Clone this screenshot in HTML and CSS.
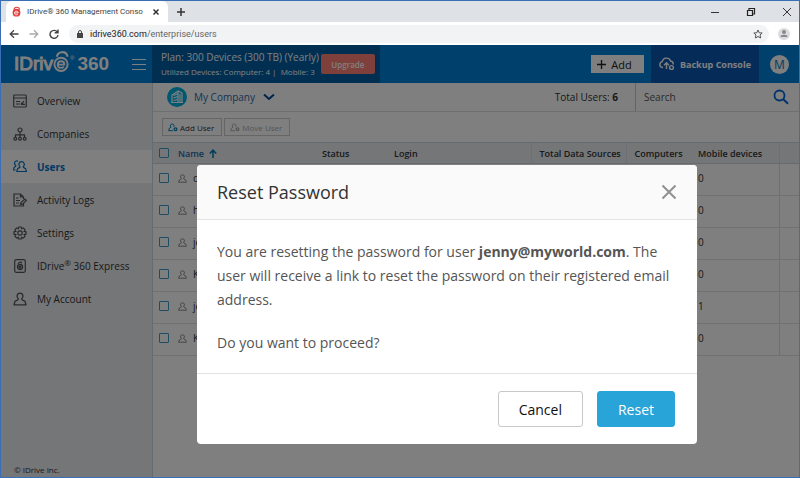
FILE: index.html
```html
<!DOCTYPE html>
<html lang="en">
<head>
<meta charset="utf-8">
<title>IDrive® 360 Management Console</title>
<link rel="stylesheet" href="styles.css">
</head>
<body>
<svg class="defs" aria-hidden="true">
  <symbol id="lock-e" viewBox="0 0 16 18"><path d="M3.500 6C4 0 13 0 13.500 6" fill="none" stroke="currentColor" stroke-width="2"/><circle cx="8" cy="11" r="7" fill="currentColor"/><path d="M4.500 11.500h6.500c0-4-6.200-4-6.500 0 0 4.300 4.500 4 6.200 2" fill="none" stroke="var(--cut)" stroke-width="1.500"/></symbol>
  <symbol id="person" viewBox="0 0 14 14"><path d="M7 1.200a3 3 0 0 0-1.800 5.400L5 7.700 2 9.400 1 12.800h12L12 9.400 9 7.700 8.800 6.600A3 3 0 0 0 7 1.200z" fill="none" stroke="currentColor" stroke-width="1.300" stroke-linejoin="round"/></symbol>
  <symbol id="user-gear" viewBox="0 0 14 12"><path d="M8 5.200a2.600 2.600 0 1 0-3.800.4L1.500 7.500.900 10.500H7" fill="none" stroke="currentColor" stroke-width="1.300"/><circle cx="10.500" cy="8.500" r="2" fill="none" stroke="currentColor" stroke-width="1.700"/></symbol>
</svg>
<div class="browser">
  <div class="tabs">
    <div class="tab">
      <svg class="favicon"><use href="#lock-e"/></svg>
      <span class="tab-title">IDrive® 360 Management Conso</span>
      <button class="plain" aria-label="Close tab"><svg width="8" height="8" viewBox="0 0 8 8"><path d="M1.500 1.500l5 5m0-5l-5 5" stroke="#333" stroke-width="1.500"/></svg></button>
    </div>
    <button class="plain new-tab" aria-label="New tab"><svg width="10" height="10" viewBox="0 0 10 10"><path d="M5 1v8M1 5h8" stroke="#333" stroke-width="1.500"/></svg></button>
    <div class="window-buttons">
      <button class="plain" aria-label="Minimize"><svg width="10" height="10" viewBox="0 0 10 10"><path d="M1 5.500h8" stroke="#333"/></svg></button>
      <button class="plain" aria-label="Restore"><svg width="10" height="10" viewBox="0 0 10 10"><path d="M1.500 3.500h5v5h-5zM3 3V1.500h5.500V7H7" fill="none" stroke="#222" stroke-width="1.200"/></svg></button>
      <button class="plain" aria-label="Close"><svg width="10" height="10" viewBox="0 0 10 10"><path d="M1 1l8 8m0-8l-8 8" stroke="#333"/></svg></button>
    </div>
  </div>
  <div class="toolbar">
    <div class="nav-buttons">
      <button class="plain" aria-label="Back"><svg width="10" height="10" viewBox="0 0 10 10"><path d="M9.500 5h-8M5 1.200L1.200 5 5 8.800" fill="none" stroke="#444" stroke-width="1.300"/></svg></button>
      <button class="plain" aria-label="Forward"><svg width="10" height="10" viewBox="0 0 10 10"><path d="M.500 5h8M5 1.200L8.800 5 5 8.800" fill="none" stroke="#aaa" stroke-width="1.300"/></svg></button>
      <button class="plain" aria-label="Reload"><svg width="10" height="10" viewBox="0 0 10 10"><path d="M8.300 3A4 4 0 1 0 9 6M9 .500v3.300H5.700" fill="none" stroke="#444" stroke-width="1.400"/></svg></button>
    </div>
    <div class="address">
      <svg width="6" height="8" viewBox="0 0 6 8"><path d="M1.500 3.500V2a1.500 1.500 0 0 1 3 0v1.500" fill="none" stroke="#444"/><path d="M0 3h6v5H0z" fill="#444"/></svg>
      <span class="url">idrive360.com<span class="path">/enterprise/users</span></span>
      <svg width="10" height="10" viewBox="0 0 10 10"><path d="M5 1l1.200 2.800 3 .2L7 6l.700 3L5 7.500 2.300 9 3 6 .800 4l3-.2z" fill="none" stroke="#555"/></svg>
    </div>
    <svg class="profile" viewBox="0 0 12 12"><circle cx="6" cy="6" r="6" fill="#dadce0"/><circle cx="6" cy="4" r="2" fill="#888"/><path d="M2.500 9a3.500 2.300 0 0 1 7 0z" fill="#888"/></svg>
  </div>

  <div class="app">
    <header class="header">
      <div class="brand">
        <span class="logo" aria-label="IDrive 360">IDriv<svg class="logo-e" viewBox="0 0 18 24"><path d="M4 7C5 1 14 0 15.500 7" fill="none" stroke="#fff" stroke-width="2.200"/><circle cx="8.500" cy="15" r="7" fill="none" stroke="#fff" stroke-width="2"/><path d="M5 15.200h7c0-4.600-6.800-4.600-7 0 0 4.400 4.600 4.300 6.500 2.200" fill="none" stroke="#fff" stroke-width="1.900"/></svg><small>®</small><b>360</b></span>
        <button class="plain" aria-label="Menu"><svg width="14" height="12" viewBox="0 0 14 12"><path d="M0 1.500h14M0 6.500h14M0 11.500h14" stroke="#fff"/></svg></button>
      </div>
      <div class="plan">
        <div>
          <p class="plan-name">Plan: 300 Devices (300 TB) (Yearly)</p>
          <p class="plan-use">Utilized Devices: Computer: 4 |&nbsp; Mobile: 3</p>
        </div>
        <button class="upgrade">Upgrade</button>
      </div>
      <button class="add"><svg width="9" height="9" viewBox="0 0 10 10"><path d="M5 0v10M0 5h10" stroke="#222" stroke-width="1.500"/></svg>Add</button>
      <button class="backup"><svg width="16" height="14" viewBox="0 0 16 14"><path d="M4 10.500H3.500a3 3 0 0 1-.300-5.900A4.300 4.300 0 0 1 11.500 4a3.200 3.200 0 0 1 2.700 3.500M7.500 12V6M5 8.300L7.500 5.800 10 8.300" fill="none" stroke="#fff" stroke-width="1.400"/><circle cx="12.500" cy="10.500" r="1.900" fill="none" stroke="#fff" stroke-width="1.400"/></svg>Backup Console</button>
      <button class="avatar">M</button>
    </header>

    <div class="columns">
      <nav class="sidebar">
        <a href="#"><svg viewBox="0 0 14 14"><rect x=".700" y="1" width="12.600" height="12" rx="1"/><path d="M1 4h12M3 7.500h4M3 10h4M8.500 8.500v1.800H12M9 10l2-3"/></svg>Overview</a>
        <a href="#"><svg viewBox="0 0 14 14"><circle cx="7" cy="3" r="2"/><path d="M7 5v5M2.500 10V7.800h9V10"/><circle cx="2.300" cy="11.700" r="1.400"/><circle cx="7" cy="11.700" r="1.400"/><circle cx="11.700" cy="11.700" r="1.400"/></svg>Companies</a>
        <a href="#" class="current"><svg viewBox="0 0 14 14"><path d="M8.500 1.700a2.700 2.700 0 0 0-1.700 4.700v1L4.600 8.600 3.800 11.500h9.600l-.8-2.900-2.200-1.200v-1A2.700 2.700 0 0 0 8.500 1.700zM5 1.200a2.300 2.300 0 0 0-2.300 4v1L1 7.500.600 10h2"/></svg>Users</a>
        <a href="#"><svg viewBox="0 0 14 14"><path d="M10.500 11v2H1V1h6.500l3 3v2M7.500 1v3h3M3 5h2.500M3 7.500h4M3 10h3"/><path d="M7.500 11.500l.5-2L12 6l1.500 1.500-4 3.600z"/></svg>Activity Logs</a>
        <a href="#"><svg viewBox="0 0 14 14"><circle cx="7" cy="7" r="2.200"/><path d="M5.800 1h2.400l.4 1.700 1.600-.8 1.800 1.800-.9 1.600 1.900.5v2.400l-1.900.5.900 1.600-1.800 1.800-1.600-.8-.4 1.700H5.800l-.4-1.700-1.600.8L2 10.300l.9-1.600L1 8.200V5.800l1.900-.5L2 3.700l1.800-1.800 1.600.8z"/></svg>Settings</a>
        <a href="#"><svg viewBox="0 0 14 14"><rect x="1.700" y=".700" width="10.600" height="12.600" rx="1.500"/><circle cx="7" cy="8" r="2.600"/><path d="M5 5c.3-2 3-2.500 4-.7M5.800 8h2.400c0-1.500-2.300-1.500-2.400 0 0 1.500 1.500 1.500 2 .8"/></svg><span>IDrive<sup>®</sup> 360 Express</span></a>
        <a href="#"><svg viewBox="0 0 14 14"><use href="#person"/></svg>My Account</a>
        <footer>© IDrive Inc.</footer>
      </nav>

      <main class="main">
        <div class="company-bar">
          <svg class="company-icon" viewBox="0 0 20 20"><circle cx="10" cy="10" r="10" fill="#00b0e0"/><path d="M5 15.500V8l6-4v11.500M11 4l4 2v9.500M4 15.500h12M6.500 8.500L11 6.500M6.500 11L11 9.500M6.500 13.500l4.500-1M13 7v8" fill="none" stroke="#fff" stroke-width="1.200"/></svg>
          <button class="plain company">My Company<svg width="12" height="8" viewBox="0 0 12 8"><path d="M1 1.500l5 4.500 5-4.500" fill="none" stroke="currentColor" stroke-width="2"/></svg></button>
          <span class="total">Total Users: <b>6</b></span>
          <label class="search"><input type="text" placeholder="Search" aria-label="Search"><svg width="16" height="16" viewBox="0 0 16 16"><circle cx="6.500" cy="6.500" r="5" fill="none" stroke="#0064dc" stroke-width="1.800"/><path d="M10 10l5 4.700" stroke="#0064dc" stroke-width="2"/></svg></label>
        </div>
        <div class="actions">
          <button><svg class="blue"><use href="#user-gear"/></svg>Add User</button>
          <button disabled><svg><use href="#user-gear"/></svg>Move User</button>
        </div>
        <table>
          <colgroup><col class="c-check"><col class="c-name"><col class="c-status"><col><col class="c-sources"><col class="c-computers"><col class="c-mobile"><col class="c-end"></colgroup>
          <thead>
            <tr><th><input type="checkbox" aria-label="Select all"></th><th class="sorted">Name <svg width="8" height="9" viewBox="0 0 8 9"><path d="M4 9V1.500M.800 4.500L4 1.200l3.200 3.300" fill="none" stroke="#0078b8" stroke-width="1.500"/></svg></th><th>Status</th><th>Login</th><th class="rule">Total Data Sources</th><th class="rule">Computers</th><th>Mobile devices</th><th class="rule"></th></tr>
          </thead>
          <tbody>
            <tr><td><input type="checkbox" aria-label="Select d"></td><td><svg class="row-user"><use href="#person"/></svg>d</td><td></td><td></td><td></td><td></td><td>0</td><td class="rule"></td></tr>
            <tr><td><input type="checkbox" aria-label="Select h"></td><td><svg class="row-user"><use href="#person"/></svg>h</td><td></td><td></td><td></td><td></td><td>0</td><td class="rule"></td></tr>
            <tr><td><input type="checkbox" aria-label="Select je"></td><td><svg class="row-user"><use href="#person"/></svg>je</td><td></td><td></td><td></td><td></td><td>0</td><td class="rule"></td></tr>
            <tr><td><input type="checkbox" aria-label="Select K"></td><td><svg class="row-user"><use href="#person"/></svg>K</td><td></td><td></td><td></td><td></td><td>0</td><td class="rule"></td></tr>
            <tr><td><input type="checkbox" aria-label="Select je"></td><td><svg class="row-user"><use href="#person"/></svg>je</td><td></td><td></td><td></td><td></td><td>1</td><td class="rule"></td></tr>
            <tr><td><input type="checkbox" aria-label="Select K"></td><td><svg class="row-user"><use href="#person"/></svg>K</td><td></td><td></td><td></td><td></td><td>0</td><td class="rule"></td></tr>
          </tbody>
        </table>
      </main>
    </div>

    <div class="overlay">
      <section class="modal" role="dialog" aria-labelledby="dialog-title">
        <header>
          <h2 id="dialog-title">Reset Password</h2>
          <button class="plain" aria-label="Close dialog"><svg width="16" height="16" viewBox="0 0 16 16"><path d="M1.500 1.500l13 13m0-13l-13 13" stroke="#909090" stroke-width="2"/></svg></button>
        </header>
        <div class="modal-body">
          <p>You are resetting the password for user <b>jenny@myworld.com</b>. The user will receive a link to reset the password on their registered email address.</p>
          <p>Do you want to proceed?</p>
        </div>
        <footer>
          <button class="cancel">Cancel</button>
          <button class="reset">Reset</button>
        </footer>
      </section>
    </div>
  </div>
</div>
</body>
</html>
```
FILE: styles.css
```css
* { box-sizing: border-box; }
body { margin: 0; font-family: "Open Sans", "Noto Sans", sans-serif; font-size: 10px; color: #333; }
p, h2 { margin: 0; }
button, input { font: inherit; color: inherit; }
svg { flex: none; }
.defs { position: absolute; width: 0; height: 0; }
.plain { border: 0; padding: 0; background: none; display: flex; align-items: center; }

.browser { min-height: 100vh; border: 1px solid #3b6fb5; display: flex; flex-direction: column; }
.tabs { display: flex; align-items: center; height: 21px; background: #dee1e6; }
.tab { display: flex; align-items: center; gap: 6px; width: 162px; height: 100%; margin-left: 5px; padding: 0 8px 0 6px; background: #fff; border-radius: 6px 6px 0 0; }
.favicon { width: 9px; height: 11px; color: #e04040; --cut: #fff; }
.tab-title { flex: 1; white-space: nowrap; font: 8px/16px Roboto, sans-serif; color: #444; }
.new-tab { margin-left: 8px; }
.window-buttons { display: flex; gap: 26px; margin-left: auto; padding-right: 7px; }
.toolbar { display: flex; align-items: center; height: 23px; padding: 0 9px 0 8px; background: #fff; }
.nav-buttons { display: flex; gap: 10px; margin-right: 10px; }
.address { flex: 1; display: flex; align-items: center; gap: 7px; height: 18px; padding: 0 6px 0 8px; border-radius: 9px; background: #f1f3f4; }
.url { flex: 1; font: 9px/16px Roboto, sans-serif; color: #222; }
.path { color: #666; }
.profile { width: 12px; height: 12px; margin-left: 9px; }

.app { position: relative; flex: 1; display: flex; flex-direction: column; background: #fff; }
.header { display: flex; align-items: center; height: 38px; background: #0080d8; color: #fff; }
.brand { display: flex; align-items: center; justify-content: space-between; width: 151px; padding: 0 6px 0 13px; }
.logo { display: flex; align-items: center; font: 19px/24px "Liberation Sans", sans-serif; -webkit-text-stroke: 1px #fff; }
.logo-e { width: 17px; height: 23px; margin-bottom: 5px; }
.logo small { font-size: 6px; line-height: 16px; margin-right: 3px; align-self: flex-start; -webkit-text-stroke: 0; }
.logo b { font-size: 19px; -webkit-text-stroke: 0; }
.plan { display: flex; align-items: center; gap: 2px; height: 100%; padding: 0 5px 0 9px; background: #005ea4; }
.plan-name { font-size: 10px; line-height: 16px; }
.plan-use { font-size: 8px; line-height: 14px; }
.upgrade { width: 54px; height: 20px; padding: 0; border: 0; border-radius: 2px; background: #ff8078; color: #fff; font-size: 8px; font-weight: 600; }
.add { display: flex; align-items: center; justify-content: center; gap: 5px; width: 53px; height: 18px; margin: 0 7px 0 auto; padding: 0 6px 0 0; border: 0; background: #fff; color: #222; font-size: 11px; }
.backup { display: flex; align-items: center; justify-content: center; gap: 5px; width: 108px; height: 100%; padding: 0; border: 0; background: #0a58b0; color: #fff; font-size: 9px; font-weight: 700; }
.avatar { width: 19px; height: 19px; margin: 0 10px 0 11px; padding: 0; border: 0; border-radius: 50%; background: #fff; color: #0078c8; font-size: 12px; }

.columns { flex: 1; display: flex; }
.sidebar { display: flex; flex-direction: column; width: 152px; padding-top: 1px; border-right: 1px solid #c8d8e2; background: #e8ecf0; }
.sidebar a { display: flex; align-items: center; gap: 10px; height: 33px; padding: 0 12px; color: #333; text-decoration: none; }
.sidebar svg { width: 14px; height: 14px; fill: none; stroke: currentColor; stroke-width: 1.200; }
.sidebar a svg { color: #555; }
.sidebar .current { background: #fff; font-weight: 700; }
.sidebar .current, .sidebar .current svg { color: #0074c8; }
.sidebar sup { font-size: 8px; line-height: 0; }
.sidebar footer { margin-top: auto; padding: 0 13px; font-size: 8px; line-height: 14px; }

.main { flex: 1; min-width: 0; }
.company-bar { display: flex; align-items: center; height: 29px; padding-left: 14px; border-bottom: 1px solid #d8e0e6; }
.company-icon { width: 20px; height: 20px; margin-right: 7px; }
.company { gap: 8px; color: #2868a8; }
.company svg { color: #004a98; }
.total { margin-left: auto; padding-right: 17px; }
.search { display: flex; align-items: center; justify-content: space-between; width: 164px; height: 28px; padding: 0 10px 0 8px; border-left: 1px solid #b8ccd8; }
.search input { width: 110px; border: 0; padding: 0; background: none; }
.search input::placeholder { color: #555; }
.actions { display: flex; gap: 2px; height: 30px; padding: 6px 9px; }
.actions button { display: flex; align-items: center; gap: 2px; height: 18px; padding: 0 7px 0 5px; border: 1px solid #ccc; background: #fff; font-size: 8px; }
.actions button:disabled { color: #aaa; }
.actions svg { width: 10px; height: 9px; }
.actions .blue { color: #007cb8; }

table { width: 100%; border-collapse: collapse; table-layout: fixed; }
.c-check { width: 25px; }
.c-name { width: 144px; }
.c-status { width: 72px; }
.c-sources { width: 95px; }
.c-computers { width: 64px; }
.c-mobile { width: 89px; }
.c-end { width: 20px; }
th, td { padding: 0; text-align: left; white-space: nowrap; }
th { height: 21px; font-size: 9px; font-weight: 600; background: #e8ecf0; border-top: 1px solid #c8d8e2; border-bottom: 1px solid #c8d8e2; }
th.rule { padding-left: 8px; }
.rule { border-left: 1px solid #d8e0e6; }
th:last-child { padding: 0; }
.sorted { color: #2868a8; }
.sorted svg { margin-left: 3px; vertical-align: -1px; }
td { height: 32px; padding-bottom: 3px; font-size: 10px; border-bottom: 1px solid #dde2e6; }
td:nth-child(7), th:nth-child(7) { padding-left: 8px; }
input[type="checkbox"] { appearance: none; display: block; width: 10px; height: 10px; margin: 0 0 0 6px; border: 1px solid #3c9cc8; border-radius: 1px; }
.row-user { width: 9px; height: 9px; margin-right: 6px; vertical-align: -1px; color: #777; }

.overlay { position: absolute; inset: 0; display: flex; align-items: flex-start; padding: 120px 102px 0 196px; background: rgba(0, 0, 0, 0.5); }
.modal { flex: 1; border-radius: 4px; overflow: hidden; background: #fff; }
.modal header { display: flex; align-items: center; justify-content: space-between; height: 55px; padding: 0 20px; border-bottom: 1px solid #e3e3e3; background: #fafafa; }
.modal h2 { font-size: 18px; font-weight: 400; }
.modal-body { padding: 20px 20px 18px; font-size: 14px; line-height: 24px; color: #555; }
.modal-body p + p { margin-top: 19px; }
.modal footer { display: flex; justify-content: flex-end; gap: 14px; padding: 17px 22px; border-top: 1px solid #e3e3e3; }
.modal footer button { height: 36px; padding: 0 20px; border: 1px solid #c8c8c8; border-radius: 3px; background: #fff; color: #111; font-size: 14px; }
.modal footer .reset { border-color: #29a4d9; background: #29a4d9; color: #fff; }
```
